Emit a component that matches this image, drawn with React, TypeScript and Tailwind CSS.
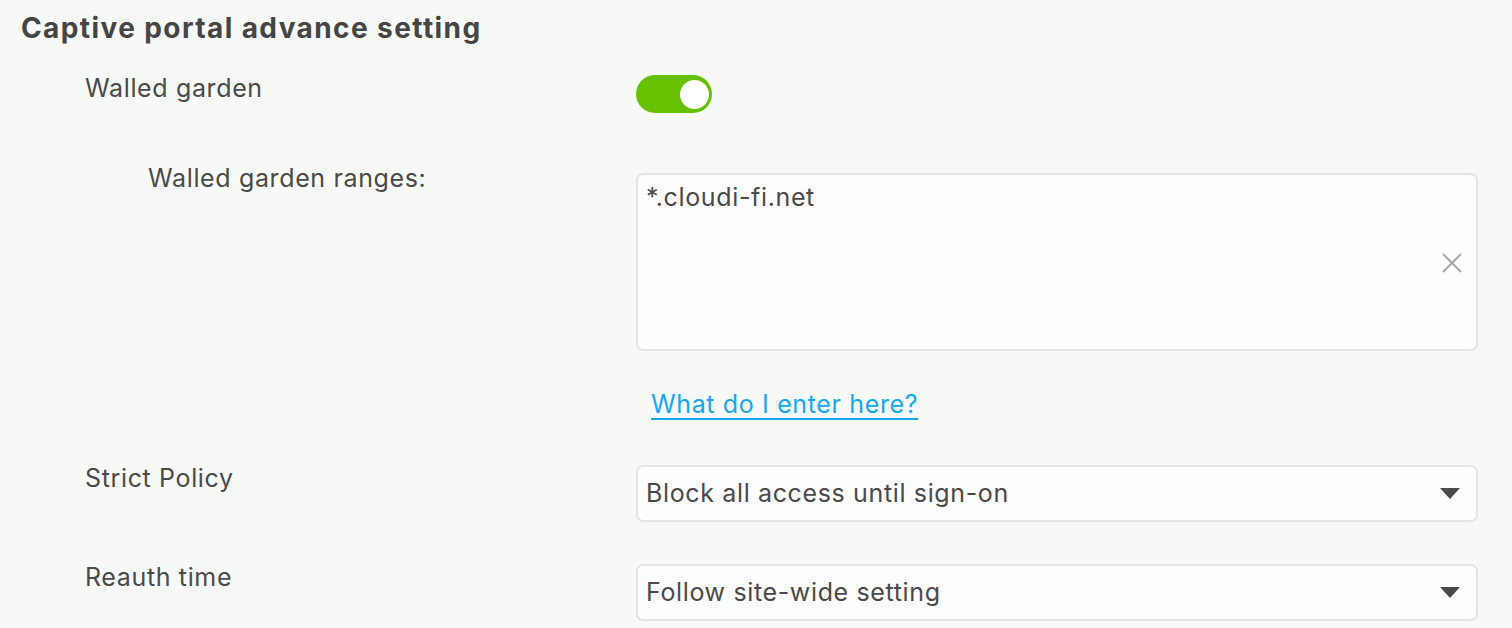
import React from "react";

const font = { fontFamily: "Inter, 'Open Sans', sans-serif" };

function Caret() {
  return (
    <svg width="20" height="11" viewBox="0 0 20 11" className="shrink-0">
      <path d="M0 0 L20 0 L10 11 Z" fill="#4a4a4a" />
    </svg>
  );
}

export default function App() {
  return (
    <div className="w-[1512px] h-[628px] bg-[#f7f9f7] text-[#4a4a4a] overflow-hidden tracking-[0.04em]" style={font}>
      <div className="pl-[21px] pt-[10px]">
        <h1 className="text-[28px] font-bold leading-[36px] tracking-[0.05em] text-[#454545]">Captive portal advance setting</h1>
      </div>
      <div className="pl-[85px] pr-[34px]">
        <div className="flex h-[115px] pt-[26px]">
          <div className="w-[551px] text-[25px] leading-[32px]">Walled garden</div>
          <div className="pt-[3px]">
            <div className="w-[76px] h-[38px] rounded-full bg-[#66c200] flex items-center justify-end pr-[3px]">
              <div className="w-[29px] h-[29px] rounded-full bg-white" />
            </div>
          </div>
        </div>
        <div className="flex">
          <div className="w-[551px] pl-[63px] pt-[1px] text-[25px] leading-[32px]">Walled garden ranges:</div>
          <div className="flex-1 flex flex-col pt-[12px]">
            <div className="relative h-[178px] rounded-[7px] border-2 border-[#e4e4e4] bg-[#fdfdfd] px-[8px] pt-[6px] text-[25px] leading-[32px]">
              *.cloudi-fi.net
              <svg className="absolute right-[14px] top-[78px]" width="20" height="20" viewBox="0 0 20 20">
                <path d="M1 1 L19 19 M19 1 L1 19" stroke="#a8a8a8" strokeWidth="2" />
              </svg>
            </div>
            <div className="pl-[15px] pt-[37px] h-[114px]">
              <a href="#" className="text-[#18a9f2] underline underline-offset-[5px] decoration-2 text-[25px] leading-[32px]">What do I enter here?</a>
            </div>
          </div>
        </div>
        <div className="flex h-[99px]">
          <div className="w-[551px] text-[25px] leading-[26px]">Strict Policy</div>
          <div className="flex-1 h-[57px] rounded-[7px] border-2 border-[#e4e4e4] bg-[#fdfdfd] pl-[8px] pr-[16px] flex items-center justify-between text-[25px]">
            <span>Block all access until sign-on</span>
            <Caret />
          </div>
        </div>
        <div className="flex">
          <div className="w-[551px] text-[25px] leading-[26px]">Reauth time</div>
          <div className="flex-1 h-[57px] rounded-[7px] border-2 border-[#e4e4e4] bg-[#fdfdfd] pl-[8px] pr-[16px] flex items-center justify-between text-[25px]">
            <span>Follow site-wide setting</span>
            <Caret />
          </div>
        </div>
      </div>
    </div>
  );
}
